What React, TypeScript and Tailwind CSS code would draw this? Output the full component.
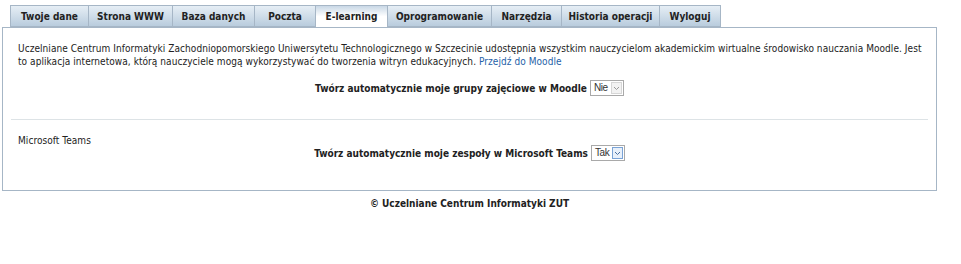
import React from "react";

const tabs = [
  { label: "Twoje dane", w: 78 },
  { label: "Strona WWW", w: 84 },
  { label: "Baza danych", w: 82 },
  { label: "Poczta", w: 61 },
  { label: "E-learning", w: 72, active: true },
  { label: "Oprogramowanie", w: 104 },
  { label: "Narzędzia", w: 70 },
  { label: "Historia operacji", w: 98 },
  { label: "Wyloguj", w: 62 },
];

function FakeSelect({ value, blue }: { value: string; blue?: boolean }) {
  return (
    <span className="ml-[3px] inline-flex h-[16px] w-[34px] items-stretch border border-[#a9a9a9] bg-white">
      <span className="flex flex-1 items-center pl-[3px] text-[10px] font-normal leading-none tracking-[-0.4px] text-[#333] [font-family:'Liberation_Sans',Arial,sans-serif]">
        {value}
      </span>
      <span
        className={
          "m-[1px] flex w-[11px] items-center justify-center " +
          (blue ? "border border-[#7aa3d6] bg-[#e8f0fa]" : "border border-[#d6d6d6] bg-[#f2f2f2]")
        }
      >
        <svg width="7" height="5" viewBox="0 0 7 5">
          <path d="M1 1 L3.5 3.5 L6 1" fill="none" stroke={blue ? "#4a6fa0" : "#999"} strokeWidth="1" />
        </svg>
      </span>
    </span>
  );
}

export default function App() {
  return (
    <div className="h-[264px] w-[961px] bg-white text-[10px] text-[#222] [font-family:'DejaVu_Sans_Condensed','DejaVu_Sans',Verdana,sans-serif]">
      <div className="flex pl-[10px] pt-[5px]">
        {tabs.map((t) => (
          <div
            key={t.label}
            style={{ width: t.w }}
            className={
              "flex h-[22px] items-center justify-center border border-r-0 border-[#a6b6c6] text-[10px] font-bold last:border-r " +
              (t.active
                ? "border-b-0 bg-gradient-to-b from-[#c9d8e6] via-white to-white"
                : "bg-gradient-to-b from-[#e6eef5] to-[#b9ccdd]")
            }
          >
            {t.label}
          </div>
        ))}
      </div>
      <div className="mx-[2px] w-[935px] border border-[#a6b6c6]">
        <div className="whitespace-nowrap px-[15px] pt-[14px] text-[10px] leading-[13px] tracking-[0.06px]">
          Uczelniane Centrum Informatyki Zachodniopomorskiego Uniwersytetu Technologicznego w Szczecinie udostępnia wszystkim nauczycielom akademickim wirtualne środowisko nauczania Moodle. Jest
          <br />
          to aplikacja internetowa, którą nauczyciele mogą wykorzystywać do tworzenia witryn edukacyjnych.{" "}
          <a className="text-[#1f5fa8]">Przejdź do Moodle</a>
        </div>
        <div className="mt-[12px] flex h-[16px] items-center justify-center text-[10px] font-bold">
          <span>Twórz automatycznie moje grupy zajęciowe w Moodle</span>
          <FakeSelect value="Nie" />
        </div>
        <div className="mx-[8px] mt-[23px] h-[1px] bg-[#dde3e6]" />
        <div className="px-[15px] pt-[14px] text-[10px] leading-[13px] tracking-[0.06px]">Microsoft Teams</div>
        <div className="-mt-[2px] flex h-[16px] items-center justify-center text-[10px] font-bold">
          <span>Twórz automatycznie moje zespoły w Microsoft Teams</span>
          <FakeSelect value="Tak" blue />
        </div>
        <div className="h-[29px]" />
      </div>
      <div className="mt-[6px] w-[939px] text-center text-[10px] font-bold leading-[13px]">© Uczelniane Centrum Informatyki ZUT</div>
    </div>
  );
}
